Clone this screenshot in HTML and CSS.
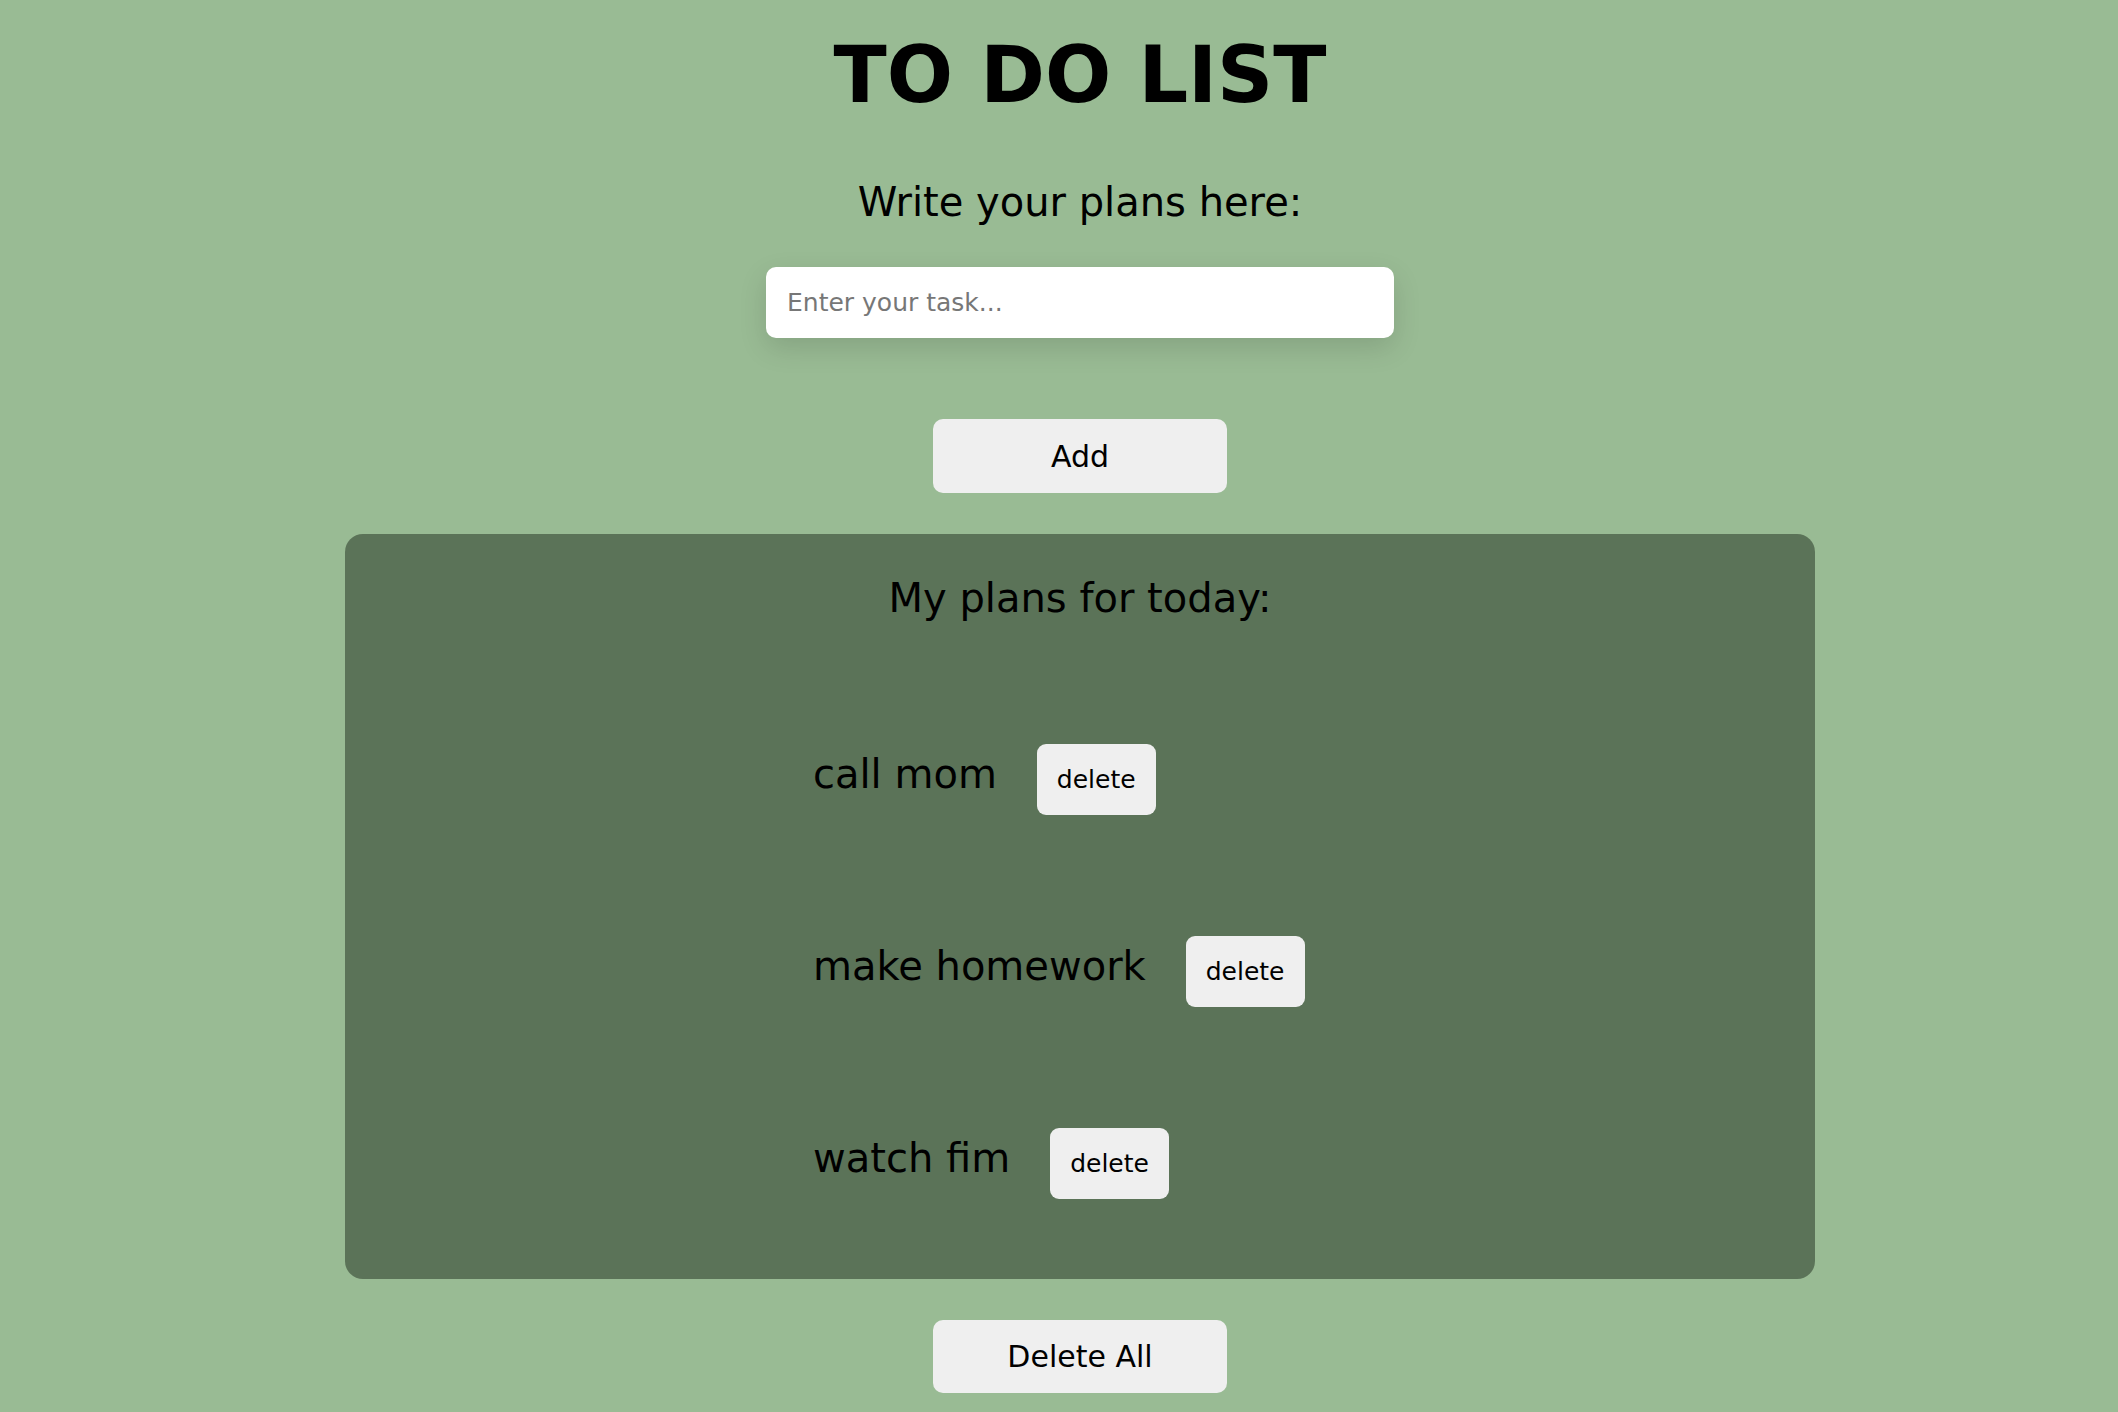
FILE: index.html
```
<!DOCTYPE html>
<html lang="en">
<head>
<meta charset="utf-8">
<title>To Do List</title>
<link rel="stylesheet" href="styles.css">
</head>
<body>
<main class="page">
  <h1 class="title">TO DO LIST</h1>
  <h2 class="subtitle">Write your plans here:</h2>
  <input class="task-input" type="text" placeholder="Enter your task...">
  <button class="btn btn-main add-btn" type="button">Add</button>
  <section class="panel">
    <h3 class="panel-title">My plans for today:</h3>
    <ul class="task-list">
      <li class="task"><span class="task-text">call mom</span><button class="btn btn-del" type="button">delete</button></li>
      <li class="task"><span class="task-text">make homework</span><button class="btn btn-del" type="button">delete</button></li>
      <li class="task"><span class="task-text">watch fim</span><button class="btn btn-del" type="button">delete</button></li>
    </ul>
  </section>
  <button class="btn btn-main delete-all" type="button">Delete All</button>
</main>
</body>
</html>
```
FILE: styles.css
```
html, body {
  margin: 0;
  padding: 0;
}
html {
  background: #99bb94;
}
body {
  background: #99bb94;
  font-family: "DejaVu Sans", "Liberation Sans", sans-serif;
  color: #000;
}
.page {
  display: flex;
  flex-direction: column;
  align-items: center;
  padding-left: 42px;
}
.title {
  margin: 36px 0 0;
  font-size: 78px;
  line-height: 78px;
  font-weight: bold;
}
.subtitle {
  margin: 68px 0 0;
  font-size: 40px;
  line-height: 40px;
  font-weight: normal;
}
.task-input {
  margin-top: 45px;
  box-sizing: border-box;
  width: 628px;
  height: 71px;
  padding: 0 21px;
  border: none;
  border-radius: 10px;
  background: #fff;
  font-family: inherit;
  font-size: 25px;
  color: #000;
  outline: none;
  box-shadow: 0 10px 28px rgba(0, 0, 0, 0.13);
}
.task-input::placeholder {
  color: #777;
}
.btn {
  border: none;
  background: #efefef;
  color: #000;
  font-family: inherit;
  cursor: pointer;
  box-sizing: border-box;
}
.btn-main {
  width: 294px;
  height: 74px;
  border-radius: 10px;
  font-size: 30px;
}
.add-btn {
  margin-top: 81px;
}
.panel {
  margin-top: 41px;
  box-sizing: border-box;
  width: 1470px;
  height: 745px;
  padding: 44px 0 0;
  background: #5b7358;
  border-radius: 18px;
  display: flex;
  flex-direction: column;
  align-items: center;
}
.panel-title {
  margin: 0;
  font-size: 40px;
  line-height: 40px;
  font-weight: normal;
}
.task-list {
  list-style: none;
  margin: 126px 0 0;
  padding: 0;
  width: 534px;
  display: flex;
  flex-direction: column;
  gap: 121px;
}
.task {
  display: flex;
  align-items: baseline;
  gap: 40px;
}
.task-text {
  font-size: 40px;
  line-height: 40px;
}
.btn-del {
  height: 71px;
  padding: 0 20px;
  border-radius: 9px;
  font-size: 25px;
}
.delete-all {
  margin-top: 41px;
  height: 73px;
}
```
